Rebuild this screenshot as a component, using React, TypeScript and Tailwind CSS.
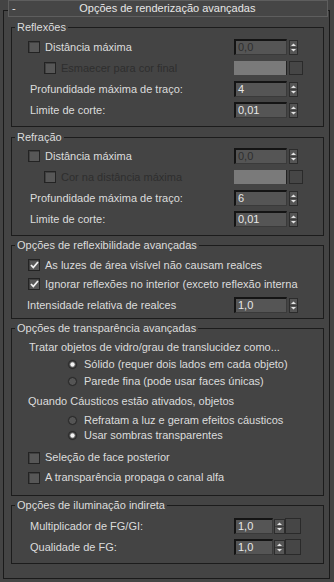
import React from 'react';

const font = { fontFamily: '"Liberation Sans", Arial, sans-serif' };

function Spinner({ boxed = false }: { boxed?: boolean }) {
  return (
    <svg width={boxed ? 11 : 9} height="15" viewBox={boxed ? '0 0 11 15' : '0 0 9 15'} className="shrink-0">
      <rect x="0.5" y="0.5" width={boxed ? 10 : 8} height="14" fill="#555555" stroke="#2c2c2c" />
      <path d={boxed ? 'M3 6 L5.5 3.5 L8 6 Z' : 'M2 6 L4.5 3.5 L7 6 Z'} fill="#e4e4e4" />
      <line x1="1" y1="7.5" x2={boxed ? 10 : 8} y2="7.5" stroke="#3c3c3c" />
      <path d={boxed ? 'M3 9 L5.5 11.5 L8 9 Z' : 'M2 9 L4.5 11.5 L7 9 Z'} fill="#e4e4e4" />
    </svg>
  );
}

function Field({ value, disabled = false, w = 'w-[53px]' }: { value: string; disabled?: boolean; w?: string }) {
  return (
    <div
      className={`${w} flex h-[16px] shrink-0 items-center border-t-2 border-l-2 border-r border-b border-t-[#141414] border-l-[#141414] border-r-[#3a3a3a] border-b-[#3a3a3a] bg-[#555555] pl-[2px] text-[11px] leading-none ${
        disabled ? 'text-[#2e2e2e]' : 'text-[#e8e8e8]'
      }`}
    >
      {value}
    </div>
  );
}

function Check({ checked = false }: { checked?: boolean }) {
  return (
    <span className="flex h-[12px] w-[12px] shrink-0 items-center justify-center border border-[#232323] bg-[#575757] shadow-[inset_1px_1px_0_#404040]">
      {checked && (
        <svg width="9" height="8" viewBox="0 0 9 8">
          <path d="M1 4 L3.3 6.5 L8 1" fill="none" stroke="#f2f2f2" strokeWidth="1.8" />
        </svg>
      )}
    </span>
  );
}

function Radio({ on = false }: { on?: boolean }) {
  return (
    <svg width="11" height="11" viewBox="0 0 11 11" className="shrink-0">
      <circle cx="5.5" cy="5.5" r="5" fill="#3e3e3e" />
      <circle cx="5.5" cy="5.5" r="4" fill="#555555" stroke="#252525" strokeWidth="1" />
      {on && <circle cx="5.5" cy="5.5" r="2.2" fill="#f4f4f4" />}
    </svg>
  );
}

function Group({ title, className = '', children }: { title: string; className?: string; children: React.ReactNode }) {
  return (
    <div className={`ml-[7px] w-[313px] border border-[#1c1c1c] ${className}`}>
      <div className="-mt-[7px] ml-[3px] w-fit bg-[#444444] px-[2px] text-[11px] leading-[13px] text-[#dcdcdc]">{title}</div>
      {children}
    </div>
  );
}

function SpinRow({ label, value, pl = 'pl-[18px]', disabled = false, className = '' }: { label: React.ReactNode; value: string; pl?: string; disabled?: boolean; className?: string }) {
  return (
    <div className={`flex h-[16px] items-center ${className}`}>
      <div className={`flex min-w-0 flex-1 items-center ${pl}`}>{label}</div>
      <div className="mr-[20px] flex w-[69px] items-center gap-[2px]">
        <Field value={value} disabled={disabled} />
        <Spinner />
      </div>
    </div>
  );
}

function ColorRow({ label, className = '' }: { label: React.ReactNode; className?: string }) {
  return (
    <div className={`flex h-[16px] items-center ${className}`}>
      <div className="flex min-w-0 flex-1 items-center pl-[32px]">{label}</div>
      <div className="mr-[20px] flex w-[69px] items-center gap-[2px]">
        <div className="h-[14px] w-[53px] border-r border-[#222222] bg-[#7a7a7a]" />
        <div className="h-[14px] w-[14px] border border-[#2a2a2a] bg-[#464646]" />
      </div>
    </div>
  );
}

function CheckLabel({ checked = false, disabled = false, children }: { checked?: boolean; disabled?: boolean; children: React.ReactNode }) {
  return (
    <span className="flex items-center gap-[5px] whitespace-nowrap">
      <Check checked={checked} />
      <span className={disabled ? 'text-[#2e2e2e]' : ''}>{children}</span>
    </span>
  );
}

function RadioLabel({ on = false, children, className = '' }: { on?: boolean; children: React.ReactNode; className?: string }) {
  return (
    <div className={`flex h-[15px] items-center gap-[6px] pl-[55px] whitespace-nowrap ${className}`}>
      <Radio on={on} />
      <span>{children}</span>
    </div>
  );
}

function FgRow({ label, className = '' }: { label: string; className?: string }) {
  return (
    <div className={`flex h-[16px] items-center ${className}`}>
      <div className="flex-1 pl-[18px]">{label}</div>
      <div className="mr-[21px] flex w-[68px] items-center">
        <Field value="1,0" w="w-[39px]" />
        <div className="ml-[1px]">
          <Spinner boxed />
        </div>
        <div className="h-[16px] w-[16px] border border-[#2a2a2a] bg-[#464646]" />
      </div>
    </div>
  );
}

export default function App() {
  return (
    <div className="h-[582px] w-[334px] overflow-hidden bg-[#444444] pt-[10px] pl-[3px] text-[11px] leading-[13px] text-[#dcdcdc]" style={font}>
      <div className="h-[569px] w-[327px] border border-[#1a1a1a]">
        {/* rollout header */}
        <div className="relative z-10 -mt-[11px] ml-[4px] flex h-[17px] w-[320px] items-center border border-[#5e5e5e] bg-[#464646]">
          <span className="pl-[3px] text-[#e6e6e6]">-</span>
          <span className="flex-1 pr-[8px] text-center text-[#e6e6e6]">Opções de renderização avançadas</span>
        </div>

        <Group title="Reflexões" className="mt-[10px] pb-[8px]">
          <div className="flex flex-col gap-[5px] pt-[5px]">
            <SpinRow pl="pl-[16px]" label={<CheckLabel>Distância máxima</CheckLabel>} value="0,0" disabled />
            <ColorRow label={<CheckLabel disabled>Esmaecer para cor final</CheckLabel>} />
            <SpinRow label="Profundidade máxima de traço:" value="4" />
            <SpinRow label="Limite de corte:" value="0,01" />
          </div>
        </Group>

        <Group title="Refração" className="mt-[10px] pb-[8px]">
          <div className="flex flex-col gap-[5px] pt-[4px]">
            <SpinRow pl="pl-[16px]" label={<CheckLabel>Distância máxima</CheckLabel>} value="0,0" disabled />
            <ColorRow label={<CheckLabel disabled>Cor na distância máxima</CheckLabel>} />
            <SpinRow label="Profundidade máxima de traço:" value="6" />
            <SpinRow label="Limite de corte:" value="0,01" />
          </div>
        </Group>

        <Group title="Opções de reflexibilidade avançadas" className="mt-[9px] pb-[5px]">
          <div className="mt-[5px] flex h-[16px] items-center pl-[16px]">
            <CheckLabel checked>As luzes de área visível não causam realces</CheckLabel>
          </div>
          <div className="mt-[3px] flex h-[16px] items-center pl-[16px]">
            <CheckLabel checked>Ignorar reflexões no interior (exceto reflexão interna</CheckLabel>
          </div>
          <SpinRow className="mt-[5px]" pl="pl-[15px]" label="Intensidade relativa de realces" value="1,0" />
        </Group>

        <Group title="Opções de transparência avançadas" className="mt-[9px] pb-[10px]">
          <div className="mt-[5px] flex h-[15px] items-center pl-[17px]">Tratar objetos de vidro/grau de translucidez como...</div>
          <RadioLabel on className="mt-[2px]">Sólido (requer dois lados em cada objeto)</RadioLabel>
          <RadioLabel className="mt-[2px]">Parede fina (pode usar faces únicas)</RadioLabel>
          <div className="mt-[5px] flex h-[15px] items-center pl-[16px]">Quando Cáusticos estão ativados, objetos</div>
          <RadioLabel className="mt-[4px]">Refratam a luz e geram efeitos cáusticos</RadioLabel>
          <RadioLabel on>Usar sombras transparentes</RadioLabel>
          <div className="mt-[7px] flex h-[15px] items-center pl-[16px]">
            <CheckLabel>Seleção de face posterior</CheckLabel>
          </div>
          <div className="mt-[5px] flex h-[15px] items-center pl-[16px]">
            <CheckLabel>A transparência propaga o canal alfa</CheckLabel>
          </div>
        </Group>

        <Group title="Opções de iluminação indireta" className="mt-[9px] pb-[8px]">
          <FgRow className="mt-[6px]" label="Multiplicador de FG/GI:" />
          <FgRow className="mt-[5px]" label="Qualidade de FG:" />
        </Group>
      </div>
    </div>
  );
}
